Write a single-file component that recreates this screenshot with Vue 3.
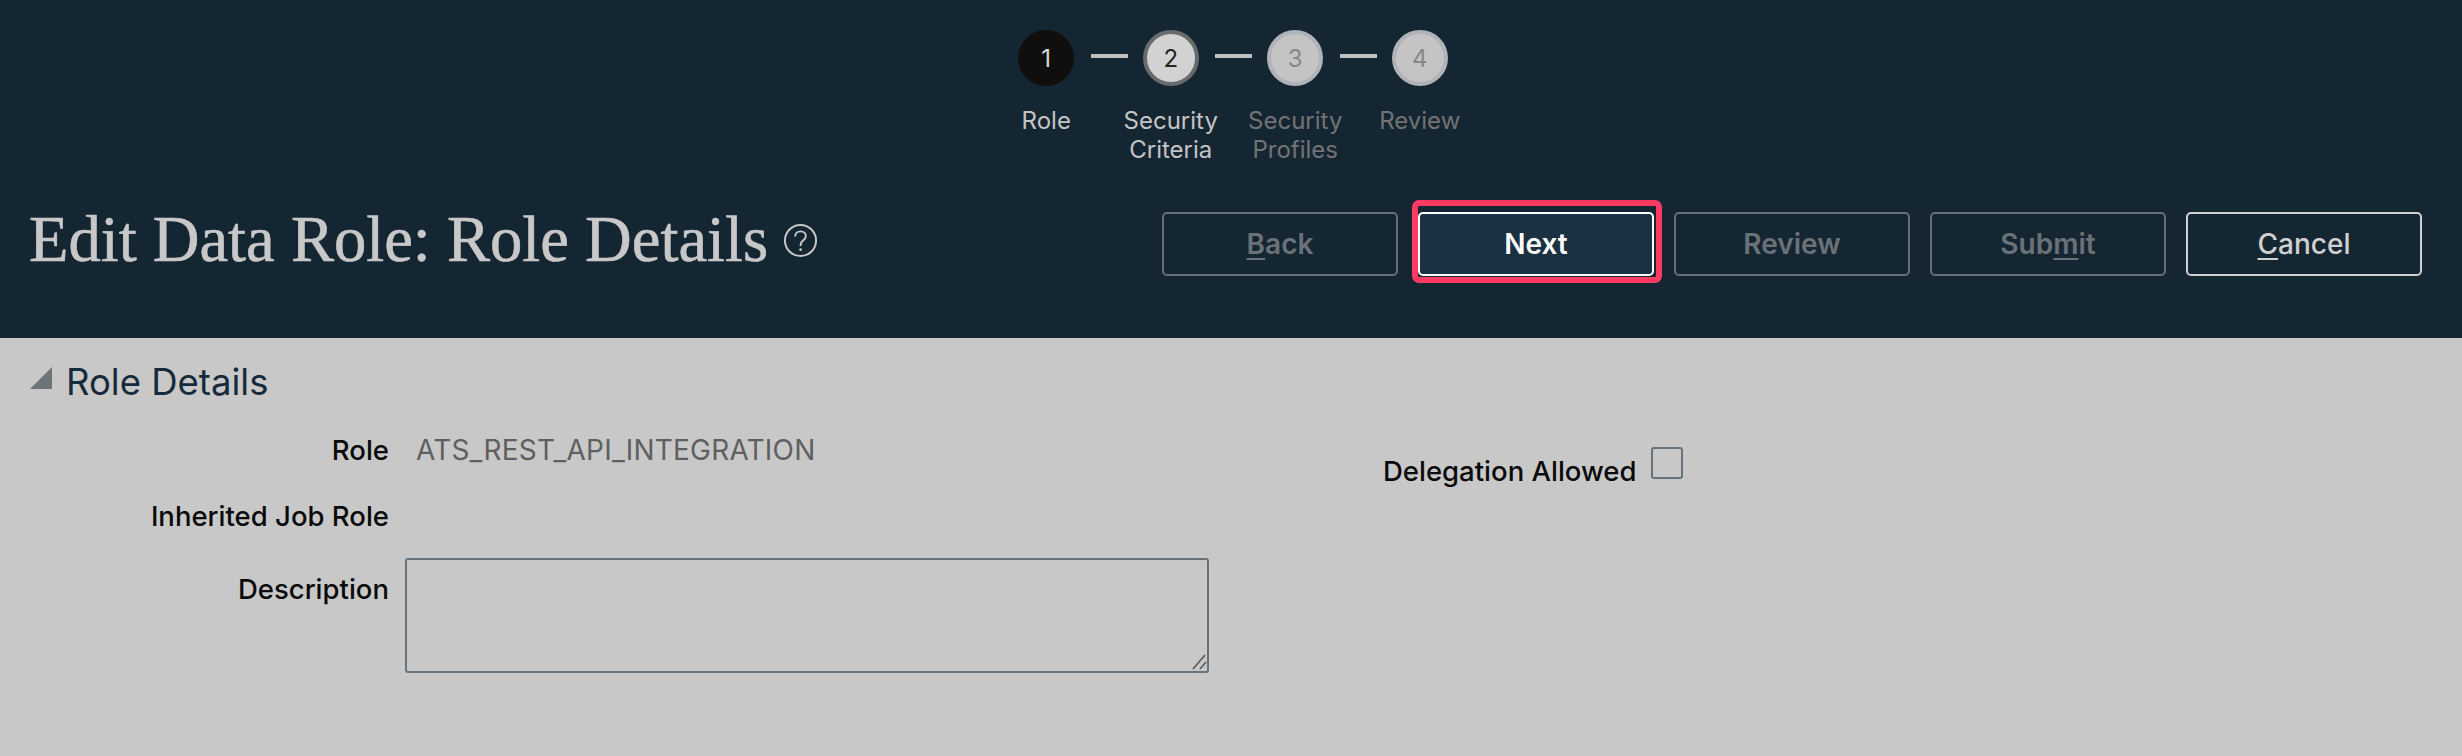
<template>
  <div class="page">
    <header class="top">
      <ol class="steps">
        <li v-for="(s, i) in steps" :key="s.n" class="step" :class="s.state">
          <span class="dot">{{ s.n }}</span>
          <span v-if="i < steps.length - 1" class="line"></span>
          <span class="step-label">{{ s.first }}<br v-if="s.second" />{{ s.second }}</span>
        </li>
      </ol>

      <div class="title-row">
        <div class="title">
          <h1>Edit Data Role: Role Details</h1>
          <svg class="help" viewBox="0 0 36 36" width="35" height="35" fill="none" stroke="#c8c8c8">
            <circle cx="18" cy="18" r="16" stroke-width="2" />
            <path d="M12.5 14c0-3.4 2.4-5.4 5.6-5.4s5.4 2 5.4 4.8c0 2.4-1.4 3.5-3 4.7-1.5 1.1-2.4 2.2-2.4 4.4v1.2" stroke-width="2" />
            <circle cx="18.1" cy="27.4" r="1.4" fill="#c8c8c8" stroke="none" />
          </svg>
        </div>
        <div class="actions">
          <button class="btn off"><u>B</u>ack</button>
          <div class="next-wrap">
            <button class="btn next">Next</button>
            <span class="callout"></span>
          </div>
          <button class="btn off">Review</button>
          <button class="btn off">Sub<u>m</u>it</button>
          <button class="btn cancel"><u>C</u>ancel</button>
        </div>
      </div>
    </header>

    <main class="content">
      <h2 class="section">
        <svg viewBox="0 0 22 22" width="22" height="22"><polygon points="22,0 22,22 0,22" fill="#6d7478" /></svg>
        Role Details
      </h2>

      <div class="form">
        <div class="col-left">
          <div class="row">
            <label>Role</label>
            <span class="value">ATS_REST_API_INTEGRATION</span>
          </div>
          <div class="row">
            <label>Inherited Job Role</label>
          </div>
          <div class="row row-top">
            <label>Description</label>
            <div class="desc-wrap">
              <textarea class="desc"></textarea>
              <svg class="grip" viewBox="0 0 16 16" width="16" height="16" stroke="#555" stroke-width="1.5" fill="none">
                <path d="M2 15 14 1M9 15 15 8" />
              </svg>
            </div>
          </div>
        </div>
        <div class="col-right">
          <label>Delegation Allowed</label>
          <span class="check"></span>
        </div>
      </div>
    </main>
  </div>
</template>

<script setup>
const steps = [
  { n: 1, first: 'Role', second: '', state: 'done' },
  { n: 2, first: 'Security', second: 'Criteria', state: 'current' },
  { n: 3, first: 'Security', second: 'Profiles', state: 'todo' },
  { n: 4, first: 'Review', second: '', state: 'todo' }
]
</script>

<style scoped>
.page {
  min-height: 756px;
  background: #c8c8c8;
  font-family: Inter, 'Liberation Sans', sans-serif;
}

.top {
  height: 338px;
  box-sizing: border-box;
  padding: 30px 40px 0 29px;
  background: #152633;
}

/* wizard */
.steps {
  display: flex;
  justify-content: center;
  height: 136px;
  margin: 0;
  padding: 0 0 0 15px;
  list-style: none;
}

.step {
  position: relative;
  width: 124.5px;
  display: flex;
  flex-direction: column;
  align-items: center;
}

.dot {
  width: 56px;
  height: 56px;
  box-sizing: border-box;
  border-radius: 50%;
  display: flex;
  align-items: center;
  justify-content: center;
  font-size: 24px;
  border: 4px solid #b0b3b8;
  background: #c4c4c4;
  color: #868686;
}

.done .dot {
  background: #100f0d;
  border-color: #100f0d;
  color: #d8d8d8;
}

.current .dot {
  background: #d2d2d2;
  border-color: #686b6d;
  color: #222;
}

.line {
  position: absolute;
  top: 24px;
  left: 106.5px;
  width: 37px;
  height: 4px;
  background: #c0c0c0;
}

.step-label {
  margin-top: 21px;
  font-size: 24px;
  line-height: 28.5px;
  text-align: center;
  color: #c4c4c4;
}

.todo .step-label {
  color: #737373;
}

.title-row {
  display: flex;
  justify-content: space-between;
  align-items: flex-start;
  margin-top: 46px;
}

.title {
  display: flex;
  align-items: flex-start;
  gap: 15px;
}

h1 {
  margin: -5px 0 0;
  font-family: 'Liberation Serif', serif;
  font-size: 64.6px;
  font-weight: 400;
  line-height: 64px;
  color: #c8c8c8;
  -webkit-text-stroke: 0.6px #c8c8c8;
}

.help {
  margin-top: 11px;
}

.actions {
  display: flex;
  gap: 20px;
}

.btn {
  display: block;
  width: 236px;
  height: 64px;
  padding: 0;
  box-sizing: border-box;
  border: 2px solid #676e74;
  border-radius: 5px;
  background: transparent;
  font-family: inherit;
  font-size: 28px;
  font-weight: 600;
  color: #6a7278;
}

.btn u {
  text-underline-offset: 4px;
  text-decoration-thickness: 2px;
}

.next-wrap {
  position: relative;
}

.next {
  border-color: #fff;
  background: #1a3141;
  color: #fff;
}

.callout {
  position: absolute;
  top: -12px;
  left: -6px;
  right: -8px;
  bottom: -7px;
  border: 6px solid #ff3b63;
  border-radius: 7px;
  pointer-events: none;
}

.cancel {
  border-color: #d0d0d0;
  font-weight: 500;
  color: #d0d0d0;
}

/* body */
.content {
  padding: 22px 0 0 30px;
}

.section {
  display: flex;
  align-items: center;
  gap: 14px;
  margin: 0;
  font-size: 36.5px;
  font-weight: 400;
  line-height: 44px;
  color: #152a3a;
}

.section svg {
  margin-top: -8px;
}

.form {
  display: flex;
  margin-top: 29px;
}

.col-left {
  width: 1178px;
  display: flex;
  flex-direction: column;
}

.row {
  display: flex;
  gap: 16px;
  height: 66px;
  align-items: flex-start;
}

.row label,
.col-right label {
  font-size: 27.5px;
  font-weight: 500;
  line-height: 34px;
  color: #0a0a0a;
}

.row label {
  width: 359px;
  text-align: right;
  flex-shrink: 0;
}

.value {
  margin-left: 11px;
  font-size: 28px;
  letter-spacing: 0.2px;
  line-height: 34px;
  color: #5f5f5f;
}

.row-top {
  height: auto;
  margin-top: 7px;
}

.desc-wrap {
  position: relative;
  margin-top: -14px;
}

.desc {
  display: block;
  width: 804px;
  height: 115px;
  box-sizing: border-box;
  border: 2px solid #64737c;
  border-radius: 3px;
  background: transparent;
  outline: none;
  resize: none;
}

.grip {
  position: absolute;
  right: 2px;
  bottom: 3px;
}

.col-right {
  display: flex;
  align-items: flex-start;
  gap: 14px;
  margin-left: 175px;
  margin-top: 21px;
}

.check {
  width: 32px;
  height: 32px;
  box-sizing: border-box;
  border: 2px solid #64737c;
  border-radius: 3px;
  margin-top: -7px;
}
</style>

<style>
html, body {
  margin: 0;
  background: #c8c8c8;
}
</style>
